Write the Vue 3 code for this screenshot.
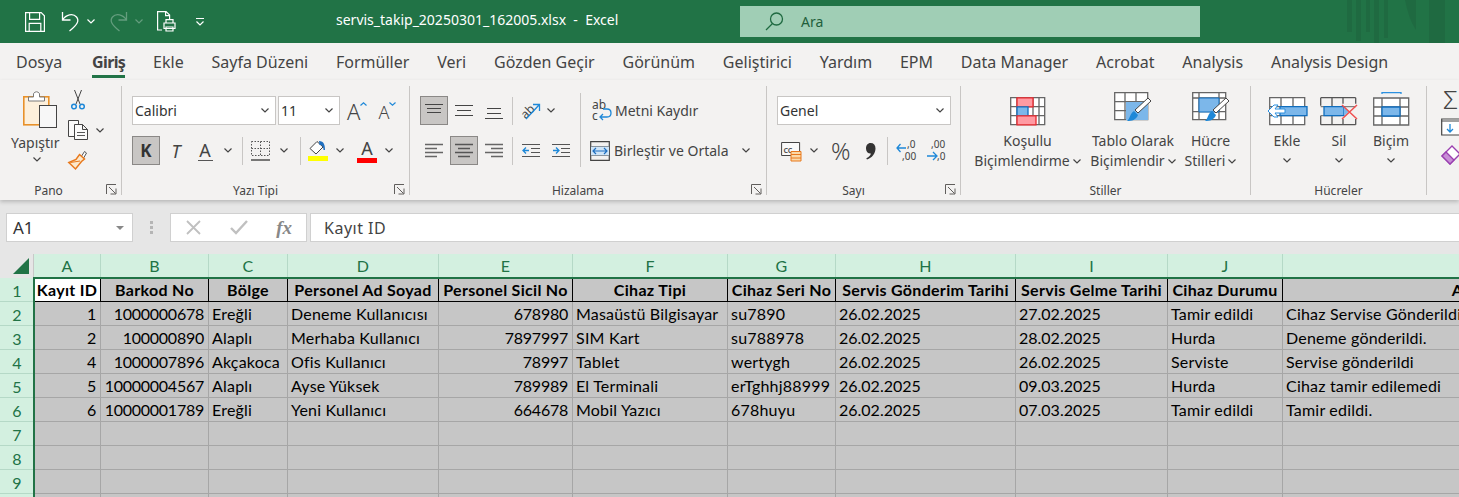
<script setup>
const tabs = ['Dosya','Giriş','Ekle','Sayfa Düzeni','Formüller','Veri','Gözden Geçir','Görünüm','Geliştirici','Yardım','EPM','Data Manager','Acrobat','Analysis','Analysis Design']
const columns = [
  { l: 'A', w: 67 }, { l: 'B', w: 108 }, { l: 'C', w: 79 }, { l: 'D', w: 151 }, { l: 'E', w: 134 },
  { l: 'F', w: 155 }, { l: 'G', w: 108 }, { l: 'H', w: 180 }, { l: 'I', w: 152 }, { l: 'J', w: 115 }, { l: 'K', w: 406 }
]
const gridCols = '34px ' + columns.map(c => c.w + 'px').join(' ')
const head = ['Kayıt ID','Barkod No','Bölge','Personel Ad Soyad','Personel Sicil No','Cihaz Tipi','Cihaz Seri No','Servis Gönderim Tarihi','Servis Gelme Tarihi','Cihaz Durumu','Açıklama']
const rows = [
  ['1','1000000678','Ereğli','Deneme Kullanıcısı','678980','Masaüstü Bilgisayar','su7890','26.02.2025','27.02.2025','Tamir edildi','Cihaz Servise Gönderildi'],
  ['2','100000890','Alaplı','Merhaba Kullanıcı','7897997','SIM Kart','su788978','26.02.2025','28.02.2025','Hurda','Deneme gönderildi.'],
  ['4','1000007896','Akçakoca','Ofis Kullanıcı','78997','Tablet','wertygh','26.02.2025','26.02.2025','Serviste','Servise gönderildi'],
  ['5','10000004567','Alaplı','Ayse Yüksek','789989','El Terminali','erTghhj88999','26.02.2025','09.03.2025','Hurda','Cihaz tamir edilemedi'],
  ['6','10000001789','Ereğli','Yeni Kullanıcı','664678','Mobil Yazıcı','678huyu','26.02.2025','07.03.2025','Tamir edildi','Tamir edildi.'],
  ...Array.from({ length: 4 }, () => Array(11).fill(''))
]
const numeric = new Set([0, 1, 4])
const dates = new Set([7, 8])
</script>

<template>
  <div class="app">
    <svg class="defs" width="0" height="0">
      <symbol id="chev" viewBox="0 0 8 5"><path d="M.5.5 4 4 7.5.5" fill="none" stroke="currentColor" stroke-width="1.2"/></symbol>
      <symbol id="launch" viewBox="0 0 11 11"><path d="M.5 10V.5H10M3 3l6.5 6.5M4.5 10h5.5V4.5" fill="none" stroke="#605e5c"/></symbol>
      <symbol id="al-top" viewBox="0 0 18 18"><path d="M0 2.5h18M2 6.5h14M2 10.5h14" stroke="#444" stroke-width="1.2"/></symbol>
      <symbol id="al-mid" viewBox="0 0 18 18"><path d="M0 3.5h18M2 8.5h14M0 13.5h18" stroke="#444" stroke-width="1.2"/></symbol>
      <symbol id="al-bot" viewBox="0 0 18 18"><path d="M2 6.5h14M2 11.5h14M0 16.5h18" stroke="#444" stroke-width="1.2"/></symbol>
      <symbol id="tx-left" viewBox="0 0 18 18"><path d="M0 2.5h18M0 6.5h12M0 10.5h18M0 14.5h12" stroke="#666" stroke-width="1.3"/></symbol>
      <symbol id="tx-center" viewBox="0 0 18 18"><path d="M0 2.5h18M3 6.5h12M0 10.5h18M3 14.5h12" stroke="#555" stroke-width="1.3"/></symbol>
      <symbol id="tx-right" viewBox="0 0 18 18"><path d="M0 2.5h18M6 6.5h12M0 10.5h18M6 14.5h12" stroke="#666" stroke-width="1.3"/></symbol>
    </svg>

    <header class="titlebar">
      <svg class="qat ml25" width="20" height="20" viewBox="0 0 20 20" fill="none" stroke="#fff" stroke-width="1.2"><path d="M.6.6h15.6l3.2 3.2v15.6H.6zM4.6.6v6.8h10V.6M4.2 19.4v-8h11.6v8"/></svg>
      <svg class="qat ml16" width="19" height="21" viewBox="0 0 19 21" fill="none" stroke="#fff" stroke-width="1.3"><path d="M1.5 1v8h8M1.5 9C5 3.500 12 2 15.500 6c3 3.500 1 8-7 14"/></svg>
      <svg class="chv-w ml7"><use href="#chev"/></svg>
      <svg class="qat ml14 dim" width="19" height="21" viewBox="0 0 19 21" fill="none" stroke="#fff" stroke-width="1.3"><path d="M17.500 1v8h-8M17.500 9C14 3.500 7 2 3.500 6c-3 3.500-1 8 7 14"/></svg>
      <svg class="chv-w ml7 dim"><use href="#chev"/></svg>
      <svg class="qat ml14" width="19" height="21" viewBox="0 0 19 21" fill="none" stroke="#fff" stroke-width="1.2"><path d="M5 19H.6V.6h8.500l3.500 3.500v4M8.600.6v4h4"/><path d="M7 12h11v5.500H7zM9 12V8.600h7V12M9 16h7v4H9z"/></svg>
      <svg class="ml19" width="10" height="10" viewBox="0 0 10 10" fill="none" stroke="#fff" stroke-width="1.200"><path d="M1 1.500h8M1.500 4.500 5 8l3.500-3.500"/></svg>
      <div class="doc">servis_takip_20250301_162005.xlsx&nbsp; - &nbsp;Excel</div>
      <div class="search">
        <svg width="19" height="19" viewBox="0 0 19 19" fill="none" stroke="#1f6a41" stroke-width="1.300"><circle cx="11.500" cy="7" r="6"/><path d="M7.500 11.500 1 18"/></svg>
        <span>Ara</span>
      </div>
      <svg class="deco" width="112" height="43" viewBox="0 0 112 43" fill="#1f6a41"><path d="M0 0h5v32H0zM9 0h5v41H9zM19 0h4v32h-4zM27 0h5v43h-5zM37 0h4v38h-4zM58 0h11v30Q62 20 58 0zM82 0h16v43H82z"/></svg>
    </header>

    <nav class="tabs">
      <div v-for="t in tabs" :key="t" class="tab" :class="{ active: t === 'Giriş' }">{{ t }}</div>
    </nav>

    <section class="ribbon">
      <!-- Pano -->
      <div class="group w-pano">
        <div class="pano">
          <div class="paste">
            <svg width="34" height="38" viewBox="0 0 34 38"><rect x=".8" y="6.800" width="25" height="28" fill="#fdf0dc" stroke="#e8912a" stroke-width="1.600"/><path d="M5.500 11V7h5V3.500q3-3.500 6 0V7h5v4z" fill="#fff" stroke="#7a7a7a"/><rect x="16.500" y="15.500" width="17" height="22" fill="#f7f7f7" stroke="#444"/></svg>
            <span class="big-txt">Yapıştır</span>
            <svg class="chv"><use href="#chev"/></svg>
          </div>
          <div class="clip-tools">
            <svg class="ml3" width="14" height="20" viewBox="0 0 14 20" fill="none"><path d="M3.500 0l5.500 14M10.500 0 5 14" stroke="#444"/><circle cx="3" cy="16.500" r="2.300" stroke="#1e88d8" stroke-width="1.500"/><circle cx="11" cy="16.500" r="2.300" stroke="#1e88d8" stroke-width="1.500"/></svg>
            <div class="copy-row">
              <svg width="20" height="20" viewBox="0 0 20 20" fill="#fafafa" stroke="#444"><path d="M.5.500h10v16H.5z"/><path d="M6.500 4.500h8l5 5v10h-13zM14.500 4.500v5h5"/><path d="M9 12.500h8M9 15.500h8" stroke-width=".9"/></svg>
              <svg class="chv ml8"><use href="#chev"/></svg>
            </div>
            <svg width="20" height="20" viewBox="0 0 20 20"><path d="M13 7l3.500-5.500 2 1.500L15 9z" fill="#fff" stroke="#555"/><path d="M11.500 4.500l5 4.500-3 2.500L7.500 19 .8 12.500 8 9.500z" fill="#fce9cc" stroke="#e8791d" stroke-width="1.500"/><path d="M2.500 12.500 12 11" stroke="#e8791d"/></svg>
          </div>
        </div>
        <div class="glabel pr24">Pano</div>
        <svg class="launcher"><use href="#launch"/></svg>
      </div>

      <!-- Yazı Tipi -->
      <div class="group w-font">
        <div class="stack pl10">
          <div class="row">
            <div class="select w144"><span>Calibri</span><svg class="chv"><use href="#chev"/></svg></div>
            <div class="select w62 ml2"><span>11</span><svg class="chv"><use href="#chev"/></svg></div>
            <div class="fsize ml7"><span class="a-l">A</span><svg class="mini" width="7" height="4" viewBox="0 0 7 4"><path d="M.5 3.500 3.500.8l3 2.700" fill="none" stroke="#1e88d8" stroke-width="1.200"/></svg></div>
            <div class="fsize ml11"><span class="a-s">A</span><svg class="mini" width="7" height="4" viewBox="0 0 7 4"><path d="M.5.500l3 2.700 3-2.700" fill="none" stroke="#1e88d8" stroke-width="1.200"/></svg></div>
          </div>
          <div class="row">
            <div class="btn on bold-k">K</div>
            <div class="ital ml8">T</div>
            <div class="under ml13"><span>A</span><i></i></div>
            <svg class="chv ml11"><use href="#chev"/></svg>
            <div class="rsep ml10"></div>
            <svg class="ml8" width="19" height="20" viewBox="0 0 19 20" fill="none" stroke="#555"><path d="M.5.500h18v14H.5zM9.500.500v14M.5 7.500h18" stroke-dasharray="1.500 1.500"/><path d="M0 19h19" stroke="#333" stroke-width="1.300"/></svg>
            <svg class="chv ml10"><use href="#chev"/></svg>
            <div class="rsep ml12"></div>
            <div class="fill ml7">
              <svg width="20" height="15" viewBox="0 0 20 15"><path d="M9 1.500 2 8.500l6 5.500 7-7z" fill="#fff" stroke="#444"/><path d="M11 1c5 0 6 4 6 9h-1.500c0-3-1-5-4-5z" fill="#1e6fc0"/></svg>
              <i class="yellow"></i>
            </div>
            <svg class="chv ml8"><use href="#chev"/></svg>
            <div class="under red ml13"><span>A</span><i></i></div>
            <svg class="chv ml8"><use href="#chev"/></svg>
          </div>
        </div>
        <div class="glabel pr20">Yazı Tipi</div>
        <svg class="launcher"><use href="#launch"/></svg>
      </div>

      <!-- Hizalama -->
      <div class="group w-align">
        <div class="cols">
          <div class="stack w160">
            <div class="row">
              <div class="btn on"><svg class="i18"><use href="#al-top"/></svg></div>
              <svg class="i18 ml7"><use href="#al-mid"/></svg>
              <svg class="i18 ml12"><use href="#al-bot"/></svg>
              <div class="rsep ml9"></div>
              <svg class="ml8" width="20" height="20" viewBox="0 0 20 20"><text x="-1" y="15" transform="rotate(-45 6 10)" class="svgt">ab</text><path d="M5 18 18 4M12 3.500h6.500V10" fill="none" stroke="#1e88d8" stroke-width="1.300"/></svg>
              <svg class="chv ml6"><use href="#chev"/></svg>
            </div>
            <div class="row">
              <svg class="i18 ml5"><use href="#tx-left"/></svg>
              <div class="btn on ml7"><svg class="i18"><use href="#tx-center"/></svg></div>
              <svg class="i18 ml7"><use href="#tx-right"/></svg>
              <div class="rsep ml9"></div>
              <svg class="ml9" width="18" height="18" viewBox="0 0 18 18" fill="none"><path d="M0 2.500h18M9 6.500h9M9 10.500h9M0 14.500h18" stroke="#555" stroke-width="1.200"/><path d="M7 8.500H1M4 5.500l-3 3 3 3" stroke="#1e88d8" stroke-width="1.300"/></svg>
              <svg class="ml12" width="18" height="18" viewBox="0 0 18 18" fill="none"><path d="M0 2.500h18M9 6.500h9M9 10.500h9M0 14.500h18" stroke="#555" stroke-width="1.200"/><path d="M1 8.500h6M4 5.500l3 3-3 3" stroke="#1e88d8" stroke-width="1.300"/></svg>
            </div>
          </div>
          <div class="vsep"></div>
          <div class="stack ml9">
            <div class="row">
              <svg class="ml2" width="20" height="22" viewBox="0 0 20 22"><text x="0" y="9" class="svgt">ab</text><text x="0" y="20" class="svgt">c</text><path d="M9 17h6q4 0 4-4t-4-4h-4M11 14l-3 3 3 3" fill="none" stroke="#1e88d8" stroke-width="1.300"/></svg>
              <span class="rtxt ml3">Metni Kaydır</span>
            </div>
            <div class="row">
              <svg width="20" height="20" viewBox="0 0 20 20" fill="none"><path d="M.7.700h18.600v18.600H.7zM.7 5.500h18.600M.7 14.500h18.600" stroke="#444" stroke-width="1.200"/><path d="M1 5.500h18v9H1z" fill="#cfe5f8"/><path d="M3 10h14M6 7l-3 3 3 3M14 7l3 3-3 3" stroke="#1e6fc0" stroke-width="1.200"/></svg>
              <span class="rtxt ml4">Birleştir ve Ortala</span>
              <svg class="chv ml13"><use href="#chev"/></svg>
            </div>
          </div>
        </div>
        <div class="glabel pr20">Hizalama</div>
        <svg class="launcher"><use href="#launch"/></svg>
      </div>

      <!-- Sayı -->
      <div class="group w-num">
        <div class="stack pl10">
          <div class="row"><div class="select w174"><span>Genel</span><svg class="chv"><use href="#chev"/></svg></div></div>
          <div class="row">
            <svg class="ml4" width="21" height="22" viewBox="0 0 21 22" fill="none"><path d="M.6 2.500h18v13H.6z" stroke="#444" fill="#fafafa"/><text x="2.500" y="12.500" class="svgs">CC</text><path d="M10 11.500h10v9.500H10z" fill="#fbd9a8" stroke="#e8791d"/><path d="M10 14.500h10M10 18h10" stroke="#e8791d"/></svg>
            <svg class="chv ml8"><use href="#chev"/></svg>
            <span class="pct ml13">%</span>
            <svg class="ml15" width="13" height="20" viewBox="0 0 13 20"><path d="M6.500 2C9.800 2 11.500 4 11.500 7.500c0 5-3.500 9.500-8.500 11l-.7-1.300C5 16 6.800 14 6.800 12.500 3.800 12.500 2 10.500 2 7.500 2 4.300 3.800 2 6.500 2z" fill="#333"/></svg>
            <div class="rsep ml10"></div>
            <svg class="ml8" width="21" height="24" viewBox="0 0 21 24"><text x="11" y="9" class="svgn">,0</text><text x="6" y="21" class="svgn">,00</text><path d="M10 9H1M4.500 5 1 9l3.500 4" fill="none" stroke="#1e88d8" stroke-width="1.300"/></svg>
            <svg class="ml9" width="21" height="24" viewBox="0 0 21 24"><text x="5" y="9" class="svgn">,00</text><text x="11" y="21" class="svgn">,0</text><path d="M1 17h9M7 13l4 4-4 4" fill="none" stroke="#1e88d8" stroke-width="1.300"/></svg>
          </div>
        </div>
        <div class="glabel pr20">Sayı</div>
        <svg class="launcher"><use href="#launch"/></svg>
      </div>

      <!-- Stiller -->
      <div class="group w-style">
        <div class="bigrow">
          <div class="big w105 ml14">
            <div class="big-ic">
              <svg width="36" height="29" viewBox="0 0 36 29" fill="#fff" stroke="#666" stroke-width="1.300"><path d="M.7.700h34v27H.7zM7 .7v27M23 .7v27M29 .7v27M.7 9.700h34M.7 18.700h34"/><path d="M7 .8h16v9H7z" fill="#ff9aa2" stroke="#e8282e"/><path d="M7 9.800h11v9H7z" fill="#7cb7ea" stroke="#106ebe"/><path d="M7 18.800h19v9H7z" fill="#ff9aa2" stroke="#e8282e"/></svg>
            </div>
            <div class="big-txt">Koşullu</div>
            <div class="big-txt">Biçimlendirme <svg class="chv"><use href="#chev"/></svg></div>
          </div>
          <div class="big w90 ml8">
            <div class="big-ic">
              <svg width="38" height="34" viewBox="0 0 38 34"><path d="M.7.700h33v27H.7zM11 .7v27M22 .7v27M.7 9.700h33M.7 18.700h33" fill="#fff" stroke="#666" stroke-width="1.300"/><path d="M12 10h22v18H12z" fill="#7cb7ea"/><path d="M37 9 24 21l-3-3L34 6z" fill="#fff" stroke="#444"/><path d="M20 19l4 4c-2 5-6 6-11 6 3-2 3-8 7-10z" fill="#1e88d8"/></svg>
            </div>
            <div class="big-txt">Tablo Olarak</div>
            <div class="big-txt">Biçimlendir <svg class="chv"><use href="#chev"/></svg></div>
          </div>
          <div class="big w57 ml4">
            <div class="big-ic">
              <svg width="38" height="34" viewBox="0 0 38 34"><path d="M.7.700h33v27H.7zM7 .7v27M27 .7v27M.7 6h33M.7 19.700h33" fill="#fff" stroke="#666" stroke-width="1.300"/><path d="M7 6h20v14H7z" fill="#7cb7ea" stroke="#106ebe"/><path d="M37 9 24 21l-3-3L34 6z" fill="#fff" stroke="#444"/><path d="M20 19l4 4c-2 5-6 6-11 6 3-2 3-8 7-10z" fill="#1e88d8"/></svg>
            </div>
            <div class="big-txt">Hücre</div>
            <div class="big-txt">Stilleri <svg class="chv"><use href="#chev"/></svg></div>
          </div>
        </div>
        <div class="glabel">Stiller</div>
      </div>

      <!-- Hücreler -->
      <div class="group w-cells">
        <div class="bigrow">
          <div class="big w52 ml10">
            <div class="big-ic">
              <svg width="41" height="29" viewBox="0 0 41 29"><path d="M2.700.700h35v27h-35zM14 .7v27M26 .7v27M2.700 9.700h35M2.700 18.700h35" fill="#fff" stroke="#666" stroke-width="1.300"/><path d="M13 9.700h27v9H13z" fill="#7cb7ea" stroke="#106ebe" stroke-width="1.300"/><path d="M18 12H8l3-4H7l-6 6 6 6h4l-3-4h10z" fill="#fff" stroke="#2b90e0"/></svg>
            </div>
            <div class="big-txt">Ekle</div>
            <svg class="chv line-chev"><use href="#chev"/></svg>
          </div>
          <div class="big w52">
            <div class="big-ic">
              <svg width="38" height="29" viewBox="0 0 38 29"><path d="M.7 .7h35M.7 27.700h35M.7.700v8M.7 18.700v9M35.700.7v6M35.700 22v5.700M12 .7v9M12 18.700v9M23 .7v6M23 22v5.700" fill="none" stroke="#555" stroke-width="1.300"/><path d="M.7 9.700h35M.7 18.700h20" stroke="#666" fill="none"/><path d="M4 9.700h20v9H4z" fill="#7cb7ea" stroke="#106ebe" stroke-width="1.300"/><path d="M24 10l5 4.500-5 4.500z" fill="#7cb7ea"/><path d="M22 8l15 14M37 8 22 22" stroke="#f05050" stroke-width="1.500"/></svg>
            </div>
            <div class="big-txt">Sil</div>
            <svg class="chv line-chev"><use href="#chev"/></svg>
          </div>
          <div class="big w52">
            <div class="big-ic">
              <svg width="36" height="34" viewBox="0 0 36 34"><path d="M9 .7h19M9 0v2M28 0v2" fill="none" stroke="#2b90e0" stroke-width="1.300"/><g transform="translate(0 5.300)"><path d="M.7.700h35v27H.7zM9 .7v27M27 .7v27M.7 9.700h35M.7 18.700h35" fill="#fff" stroke="#666" stroke-width="1.300"/><path d="M9 9.700h18v9H9z" fill="#7cb7ea" stroke="#106ebe" stroke-width="1.300"/></g></svg>
            </div>
            <div class="big-txt">Biçim</div>
            <svg class="chv line-chev"><use href="#chev"/></svg>
          </div>
        </div>
        <div class="glabel">Hücreler</div>
      </div>

      <!-- Düzenleme (kırpılmış) -->
      <div class="group w-edit">
        <div class="edit">
          <span class="sigma">Σ</span>
          <svg width="18" height="18" viewBox="0 0 18 18" fill="none"><path d="M.7 1h18v16H.7z" fill="#fff" stroke="#444" stroke-width="1.200"/><path d="M.7 3h18" stroke="#444"/><path d="M9 6v8M6 11l3 3 3-3" stroke="#1e88d8" stroke-width="1.300"/></svg>
          <svg width="18" height="20" viewBox="0 0 18 20"><path d="M1 11 11 1l8 8L9 19z" fill="#fff" stroke="#9a3fb0" stroke-width="1.300"/><path d="M1 11l4-4 8 8-4 4z" fill="#c88fd6" stroke="#9a3fb0" stroke-width="1.300"/></svg>
        </div>
      </div>
    </section>

    <section class="fbar">
      <div class="namebox"><span>A1</span><i class="tri"></i></div>
      <div class="dots"><i></i><i></i><i></i></div>
      <div class="fbtns">
        <svg width="15" height="15" viewBox="0 0 15 15" fill="none" stroke="#c0c0c0" stroke-width="1.800"><path d="M1 1l13 13M14 1 1 14"/></svg>
        <svg width="18" height="15" viewBox="0 0 18 15" fill="none" stroke="#c0c0c0" stroke-width="2.400"><path d="M1 8l5 5L17 1"/></svg>
        <span class="fx">fx</span>
      </div>
      <div class="finput">Kayıt ID</div>
    </section>

    <section class="sheet" :style="{ gridTemplateColumns: gridCols }">
      <div class="corner"><svg width="16" height="16" viewBox="0 0 16 16"><path d="M16 0v16H0z" fill="#217346"/></svg></div>
      <div v-for="c in columns" :key="c.l" class="colh">{{ c.l }}</div>

      <div class="rowh">1</div>
      <div v-for="(h, i) in head" :key="h" class="cell hd" :class="{ first: i === 0 }">{{ h }}</div>

      <template v-for="(r, ri) in rows" :key="ri">
        <div class="rowh">{{ ri + 2 }}</div>
        <div v-for="(v, ci) in r" :key="ci" class="cell" :class="{ num: numeric.has(ci), date: dates.has(ci) }">{{ v }}</div>
      </template>
      <div class="selection"></div>
    </section>
  </div>
</template>

<style>
html, body { margin: 0; overflow: hidden; background: #e6e6e6; }
</style>

<style scoped>
svg { overflow: visible; }
.app { width: 1459px; height: 497px; overflow: hidden; display: flex; flex-direction: column; font-family: "Noto Sans", sans-serif; color: #444; background: #e6e6e6; }
.defs { position: absolute; }
.titlebar { position: relative; flex: 0 0 43px; background: #217346; display: flex; align-items: center; color: #fff; }
.dim { opacity: .3; }
.chv-w { width: 8px; height: 5px; color: #fff; }
.doc { position: absolute; left: 336px; top: 11px; font-size: 14px; line-height: 18px; white-space: nowrap; }
.search { position: absolute; left: 740px; top: 6px; width: 460px; height: 31px; background: #a0ceb5; display: flex; align-items: center; color: #1f5f3b; font-size: 14px; }
.search svg { margin-left: 25px; }
.search span { margin-left: 17px; }
.deco { position: absolute; left: 1347px; top: 0; }

.tabs { flex: 0 0 37px; background: #f3f2f1; display: flex; gap: 27.800px; padding-left: 16px; font-size: 16px; }
.tab { height: 24px; padding-top: 8px; line-height: 22px; border-bottom: 3px solid transparent; white-space: nowrap; }
.tab:first-child { margin-right: 2px; }
.tab.active { font-weight: 700; letter-spacing: -.6px; color: #444; border-bottom-color: #217346; }

.ribbon { position: relative; z-index: 2; flex: 0 0 120px; box-sizing: border-box; padding-top: 6px; display: flex; background: #f3f2f1; box-shadow: 0 2px 4px rgba(0,0,0,.2); height: 120px; }
.group { position: relative; box-sizing: border-box; height: 109px; border-right: 1px solid #c8c6c4; display: flex; flex-direction: column; flex: none; }
.w-pano { width: 122px; }
.w-font { width: 288px; }
.w-align { width: 357px; }
.w-num { width: 194px; }
.w-style { width: 290px; }
.w-cells { width: 176px; }
.w-edit { width: 40px; border: 0; }
.glabel { margin-top: auto; height: 14px; margin-bottom: -3px; line-height: 14px; font-size: 12px; text-align: center; white-space: nowrap; }
.pr24 { padding-right: 24px; }
.pr20 { padding-right: 20px; }
.launcher { position: absolute; right: 4px; bottom: 0; width: 11px; height: 11px; }

.pano { display: flex; padding-top: 4px; }
.paste { width: 68px; padding-left: 11px; box-sizing: border-box; display: flex; flex-direction: column; align-items: flex-start; }
.paste svg:first-child { margin-left: 12px; }
.paste .big-txt { margin-top: 5px; }
.paste .chv { margin: 4px 0 0 22px; }
.clip-tools { display: flex; flex-direction: column; gap: 10px; }
.copy-row { display: flex; align-items: center; }

.stack { margin-top: 10px; display: flex; flex-direction: column; gap: 11px; }
.row { height: 29px; display: flex; align-items: center; }
.pl10 { padding-left: 10px; }
.cols { display: flex; padding-left: 10px; }
.w160 { width: 160px; flex: none; }
.vsep { width: 1px; height: 74px; margin-top: 7px; background: #c8c6c4; flex: none; }
.rsep { width: 1px; height: 28px; background: #c8c6c4; flex: none; }
.rtxt { font-size: 14px; white-space: nowrap; }

.select { box-sizing: border-box; height: 29px; background: #fff; border: 1px solid #c8c6c4; display: flex; align-items: center; justify-content: space-between; padding: 0 6px 0 2px; font-size: 14px; color: #333; flex: none; }
.w144 { width: 144px; }
.w62 { width: 62px; }
.w174 { width: 174px; }
.chv { width: 8px; height: 5px; flex: none; color: #444; }
.fsize { display: flex; align-items: flex-start; height: 24px; }
.a-l { font-size: 22px; line-height: 24px; font-weight: 300; }
.a-s { font-size: 18px; line-height: 26px; font-weight: 300; }
.mini { margin-top: 3px; }
.btn { box-sizing: border-box; width: 28px; height: 29px; background: #c8c6c4; border: 1px solid #8a8886; display: flex; align-items: center; justify-content: center; flex: none; }
.bold-k { font-weight: 700; font-size: 17px; color: #333; }
.ital { width: 16px; text-align: center; font-style: italic; font-size: 18px; }
.under { width: 16px; display: flex; flex-direction: column; align-items: center; font-size: 18px; line-height: 20px; }
.under i { display: block; width: 15px; height: 1.500px; background: #555; }
.under.red { width: 20px; }
.under.red i { width: 20px; height: 5px; background: #f00; }
.fill { width: 20px; display: flex; flex-direction: column; align-items: center; gap: 1px; }
.fill .yellow { display: block; width: 20px; height: 5px; background: #ff0; }
.i18 { width: 18px; height: 18px; flex: none; }
.svgt { font: 12px "Noto Sans", sans-serif; fill: #444; }
.svgs { font: 700 7px "Noto Sans", sans-serif; fill: #555; }
.svgn { font: 10px "Noto Sans", sans-serif; fill: #444; }
.pct { font-size: 24px; line-height: 29px; width: 18px; font-weight: 300; }

.bigrow { display: flex; padding-top: 2px; }
.big { display: flex; flex-direction: column; align-items: center; flex: none; }
.big-ic { height: 38px; display: flex; align-items: flex-end; justify-content: center; margin-bottom: 5px; }
.big-txt { font-size: 14px; line-height: 20px; white-space: nowrap; display: flex; align-items: center; gap: 3px; }
.line-chev { margin-top: 7px; }
.w105 { width: 105px; }
.w90 { width: 90px; }
.w57 { width: 57px; }
.w52 { width: 52px; }
.edit { display: flex; flex-direction: column; align-items: flex-start; padding-left: 14px; gap: 9px; }
.sigma { font-size: 26px; line-height: 27px; height: 23px; margin-left: 2px; font-weight: 300; }

.ml2 { margin-left: 2px; } .ml3 { margin-left: 3px; } .ml4 { margin-left: 4px; } .ml5 { margin-left: 5px; }
.ml6 { margin-left: 6px; } .ml7 { margin-left: 7px; } .ml8 { margin-left: 8px; } .ml9 { margin-left: 9px; }
.ml10 { margin-left: 10px; } .ml11 { margin-left: 11px; } .ml12 { margin-left: 12px; } .ml13 { margin-left: 13px; }
.ml14 { margin-left: 14px; } .ml15 { margin-left: 15px; } .ml16 { margin-left: 16px; } .ml17 { margin-left: 17px; }
.ml19 { margin-left: 19px; } .ml25 { margin-left: 25px; }

.fbar { flex: 0 0 54px; box-sizing: border-box; padding: 13px 0 0 6px; display: flex; align-items: flex-start; background: #e6e6e6; }
.namebox { box-sizing: border-box; width: 127px; height: 29px; background: #fff; border: 1px solid #d0d0d0; display: flex; align-items: center; justify-content: space-between; padding: 0 8px 0 6px; font-size: 17px; color: #333; }
.tri { width: 0; height: 0; border-left: 4px solid transparent; border-right: 4px solid transparent; border-top: 4px solid #888; }
.dots { width: 37px; height: 29px; display: flex; flex-direction: column; align-items: center; justify-content: center; gap: 2px; }
.dots i { display: block; width: 3px; height: 3px; background: #b5b5b5; }
.fbtns { box-sizing: border-box; width: 137px; height: 29px; background: #fff; border: 1px solid #d0d0d0; display: flex; align-items: center; justify-content: space-between; padding: 0 14px 0 15px; }
.fx { font: italic 700 19px "Liberation Serif", serif; color: #888; }
.finput { box-sizing: border-box; margin-left: 3px; flex: 1; height: 29px; background: #fff; border: 1px solid #d0d0d0; border-right: 0; padding-left: 13px; font-size: 16px; letter-spacing: .5px; line-height: 29px; color: #444; }

.sheet { position: relative; flex: 1; display: grid; grid-auto-rows: 24px; overflow: hidden; background: #c6c6c6; font-family: Lato, sans-serif; font-size: 16px; letter-spacing: .2px; color: #000; }
.corner { background: #e6e6e6; display: flex; justify-content: flex-end; padding: 4px 4px 0 0; box-sizing: border-box; border-right: 1px solid #c8c8c8; }
.colh { background: #d3f0e0; border-right: 1px solid #b5d9c7; color: #217346; text-align: center; line-height: 23px; }
.rowh { background: #d3f0e0; border-bottom: 1px solid #b5d9c7; color: #217346; text-align: center; line-height: 26px; }
.cell { box-sizing: border-box; border-right: 1px solid #a6a6a6; border-bottom: 1px solid #a6a6a6; padding: 0 4px 0 3px; line-height: 24px; white-space: nowrap; overflow: hidden; }
.num { text-align: right; letter-spacing: -.25px; }
.date { letter-spacing: 0; }
.hd { font-weight: 700; text-align: center; border-color: #000; padding: 0; letter-spacing: .3px; }
.first { background: #fff; }
.selection { position: absolute; left: 33px; top: 23px; right: 0; bottom: 0; border-top: 2px solid #217346; border-left: 2px solid #217346; pointer-events: none; }
</style>
